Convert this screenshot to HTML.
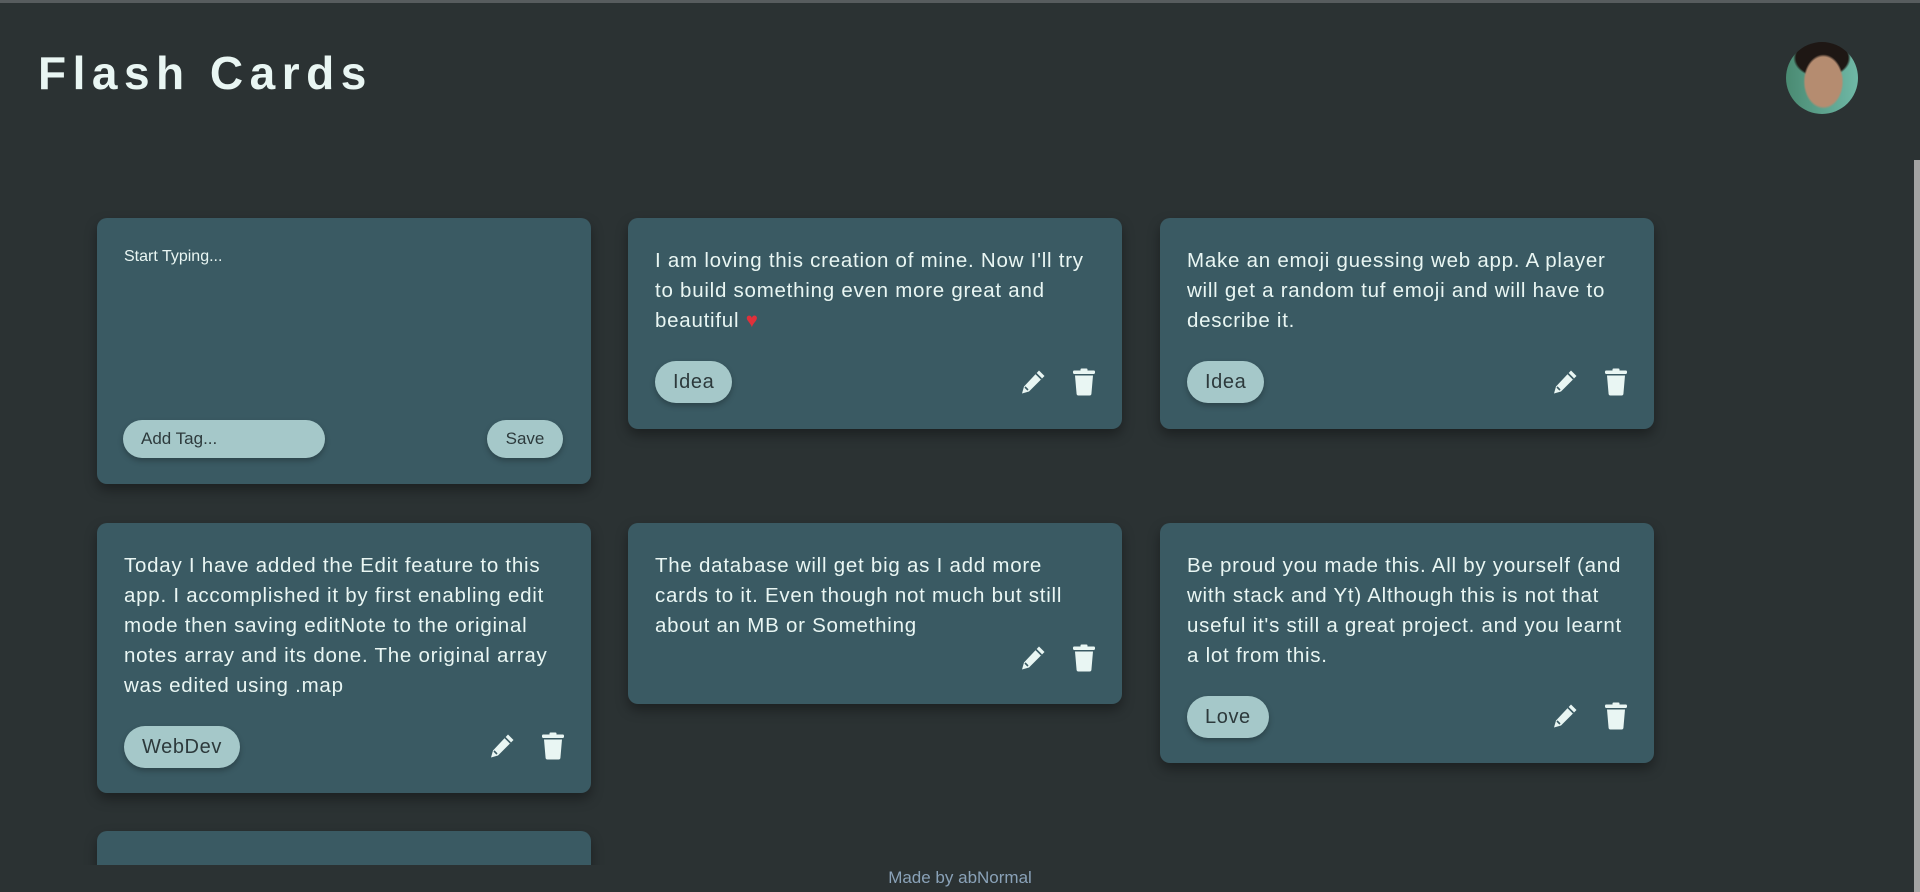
<!DOCTYPE html>
<html><head><meta charset="utf-8"><style>
*{margin:0;padding:0;box-sizing:border-box}
body{width:1920px;height:892px;background:#2b3233;overflow:hidden;position:relative;font-family:"Liberation Sans",sans-serif}
.top{position:absolute;left:0;top:0;width:1920px;height:3px;background:#575c5e}
h1{position:absolute;left:38px;top:46px;font-size:46px;font-weight:900;color:#e9f6f3;letter-spacing:6.5px}
.av{position:absolute;left:1786px;top:42px;width:72px;height:72px;border-radius:50%;background:radial-gradient(ellipse 28% 38% at 52% 55%,#b58c70 0 90%,transparent 100%),radial-gradient(ellipse 40% 28% at 50% 22%,#1e1714 0 90%,transparent 100%),linear-gradient(90deg,#4a8a72,#6fb8a6);overflow:hidden}
.sb{position:absolute;left:1914px;top:160px;width:6px;height:732px;background:#a3a3a3}
.wrap{position:absolute;left:0;top:0;width:1910px;height:865px;overflow:hidden}
.card{position:absolute;width:494px;background:#3a5a63;border-radius:10px;box-shadow:0 6px 12px rgba(0,0,0,.35)}
.t{position:absolute;left:27px;top:28px;font-size:20.5px;letter-spacing:.75px;line-height:30px;color:#e9f6f3;white-space:nowrap}
.tag{position:absolute;left:27px;height:42px;padding:0 18px;border-radius:21px;background:#a5c8c9;color:#2d3a3c;font-size:20px;letter-spacing:.6px;line-height:42px;box-shadow:0 3px 6px rgba(0,0,0,.25)}
.ic{position:absolute;width:28px;height:28px}
.ft{position:absolute;left:0;width:1920px;top:868px;text-align:center;color:#8aa2b8;font-size:17px;font-weight:300}
</style></head><body>
<div class="top"></div>
<h1>Flash Cards</h1>
<div class="av"></div>
<div class="sb"></div>
<div class="wrap">
<div class="card" style="left:97px;top:218px;height:266px">
 <div style="position:absolute;left:27px;top:30px;font-size:16px;color:#e9f6f3">Start Typing...</div>
 <div style="position:absolute;left:26px;top:202px;width:202px;height:38px;border-radius:19px;background:#a5c8c9;box-shadow:0 3px 6px rgba(0,0,0,.25);color:#2d3a3c;font-size:17px;line-height:38px;padding-left:18px">Add Tag...</div>
 <div style="position:absolute;left:390px;top:202px;width:76px;height:38px;border-radius:19px;background:#a5c8c9;box-shadow:0 3px 6px rgba(0,0,0,.25);color:#2d3a3c;font-size:17px;line-height:38px;text-align:center">Save</div>
</div>

<div class="card" style="left:628px;top:218px;height:211px">
 <div class="t">I am loving this creation of mine. Now I'll try<br>to build something even more great and<br>beautiful <span style="color:#e0303a">♥</span></div>
 <div class="tag" style="top:143px">Idea</div>
 <svg class="ic" style="left:391px;top:150px" viewBox="0 0 28 28"><path d="M20 2.5l5.5 5.5-15.5 15.5-7 2 2-7z" fill="#e9f6f3"/><path d="M17 5.5l5.5 5.5M6 19l3 3" stroke="#3a5a63" stroke-width="1.6"/></svg>
 <svg class="ic" style="left:442px;top:150px" viewBox="0 0 28 28"><rect x="3" y="2.5" width="22" height="3.5" rx="1.2" fill="#e9f6f3"/><rect x="10.5" y="0.5" width="7" height="3" rx="1" fill="#e9f6f3"/><path d="M5 7.5h18l-1.6 18.5a1.8 1.8 0 0 1-1.8 1.5H8.4a1.8 1.8 0 0 1-1.8-1.5z" fill="#e9f6f3"/></svg>
</div>

<div class="card" style="left:1160px;top:218px;height:211px">
 <div class="t">Make an emoji guessing web app. A player<br>will get a random tuf emoji and will have to<br>describe it.</div>
 <div class="tag" style="top:143px">Idea</div>
 <svg class="ic" style="left:391px;top:150px" viewBox="0 0 28 28"><path d="M20 2.5l5.5 5.5-15.5 15.5-7 2 2-7z" fill="#e9f6f3"/><path d="M17 5.5l5.5 5.5M6 19l3 3" stroke="#3a5a63" stroke-width="1.6"/></svg>
 <svg class="ic" style="left:442px;top:150px" viewBox="0 0 28 28"><rect x="3" y="2.5" width="22" height="3.5" rx="1.2" fill="#e9f6f3"/><rect x="10.5" y="0.5" width="7" height="3" rx="1" fill="#e9f6f3"/><path d="M5 7.5h18l-1.6 18.5a1.8 1.8 0 0 1-1.8 1.5H8.4a1.8 1.8 0 0 1-1.8-1.5z" fill="#e9f6f3"/></svg>
</div>

<div class="card" style="left:97px;top:523px;height:270px">
 <div class="t">Today I have added the Edit feature to this<br>app. I accomplished it by first enabling edit<br>mode then saving editNote to the original<br>notes array and its done. The original array<br>was edited using .map</div>
 <div class="tag" style="top:203px">WebDev</div>
 <svg class="ic" style="left:391px;top:209px" viewBox="0 0 28 28"><path d="M20 2.5l5.5 5.5-15.5 15.5-7 2 2-7z" fill="#e9f6f3"/><path d="M17 5.5l5.5 5.5M6 19l3 3" stroke="#3a5a63" stroke-width="1.6"/></svg>
 <svg class="ic" style="left:442px;top:209px" viewBox="0 0 28 28"><rect x="3" y="2.5" width="22" height="3.5" rx="1.2" fill="#e9f6f3"/><rect x="10.5" y="0.5" width="7" height="3" rx="1" fill="#e9f6f3"/><path d="M5 7.5h18l-1.6 18.5a1.8 1.8 0 0 1-1.8 1.5H8.4a1.8 1.8 0 0 1-1.8-1.5z" fill="#e9f6f3"/></svg>
</div>

<div class="card" style="left:628px;top:523px;height:181px">
 <div class="t">The database will get big as I add more<br>cards to it. Even though not much but still<br>about an MB or Something</div>
 <svg class="ic" style="left:391px;top:121px" viewBox="0 0 28 28"><path d="M20 2.5l5.5 5.5-15.5 15.5-7 2 2-7z" fill="#e9f6f3"/><path d="M17 5.5l5.5 5.5M6 19l3 3" stroke="#3a5a63" stroke-width="1.6"/></svg>
 <svg class="ic" style="left:442px;top:121px" viewBox="0 0 28 28"><rect x="3" y="2.5" width="22" height="3.5" rx="1.2" fill="#e9f6f3"/><rect x="10.5" y="0.5" width="7" height="3" rx="1" fill="#e9f6f3"/><path d="M5 7.5h18l-1.6 18.5a1.8 1.8 0 0 1-1.8 1.5H8.4a1.8 1.8 0 0 1-1.8-1.5z" fill="#e9f6f3"/></svg>
</div>

<div class="card" style="left:1160px;top:523px;height:240px">
 <div class="t">Be proud you made this. All by yourself (and<br>with stack and Yt) Although this is not that<br>useful it's still a great project. and you learnt<br>a lot from this.</div>
 <div class="tag" style="top:173px">Love</div>
 <svg class="ic" style="left:391px;top:179px" viewBox="0 0 28 28"><path d="M20 2.5l5.5 5.5-15.5 15.5-7 2 2-7z" fill="#e9f6f3"/><path d="M17 5.5l5.5 5.5M6 19l3 3" stroke="#3a5a63" stroke-width="1.6"/></svg>
 <svg class="ic" style="left:442px;top:179px" viewBox="0 0 28 28"><rect x="3" y="2.5" width="22" height="3.5" rx="1.2" fill="#e9f6f3"/><rect x="10.5" y="0.5" width="7" height="3" rx="1" fill="#e9f6f3"/><path d="M5 7.5h18l-1.6 18.5a1.8 1.8 0 0 1-1.8 1.5H8.4a1.8 1.8 0 0 1-1.8-1.5z" fill="#e9f6f3"/></svg>
</div>

<div class="card" style="left:97px;top:831px;height:60px"></div>
</div>
<div class="ft">Made by abNormal</div>
</body></html>
